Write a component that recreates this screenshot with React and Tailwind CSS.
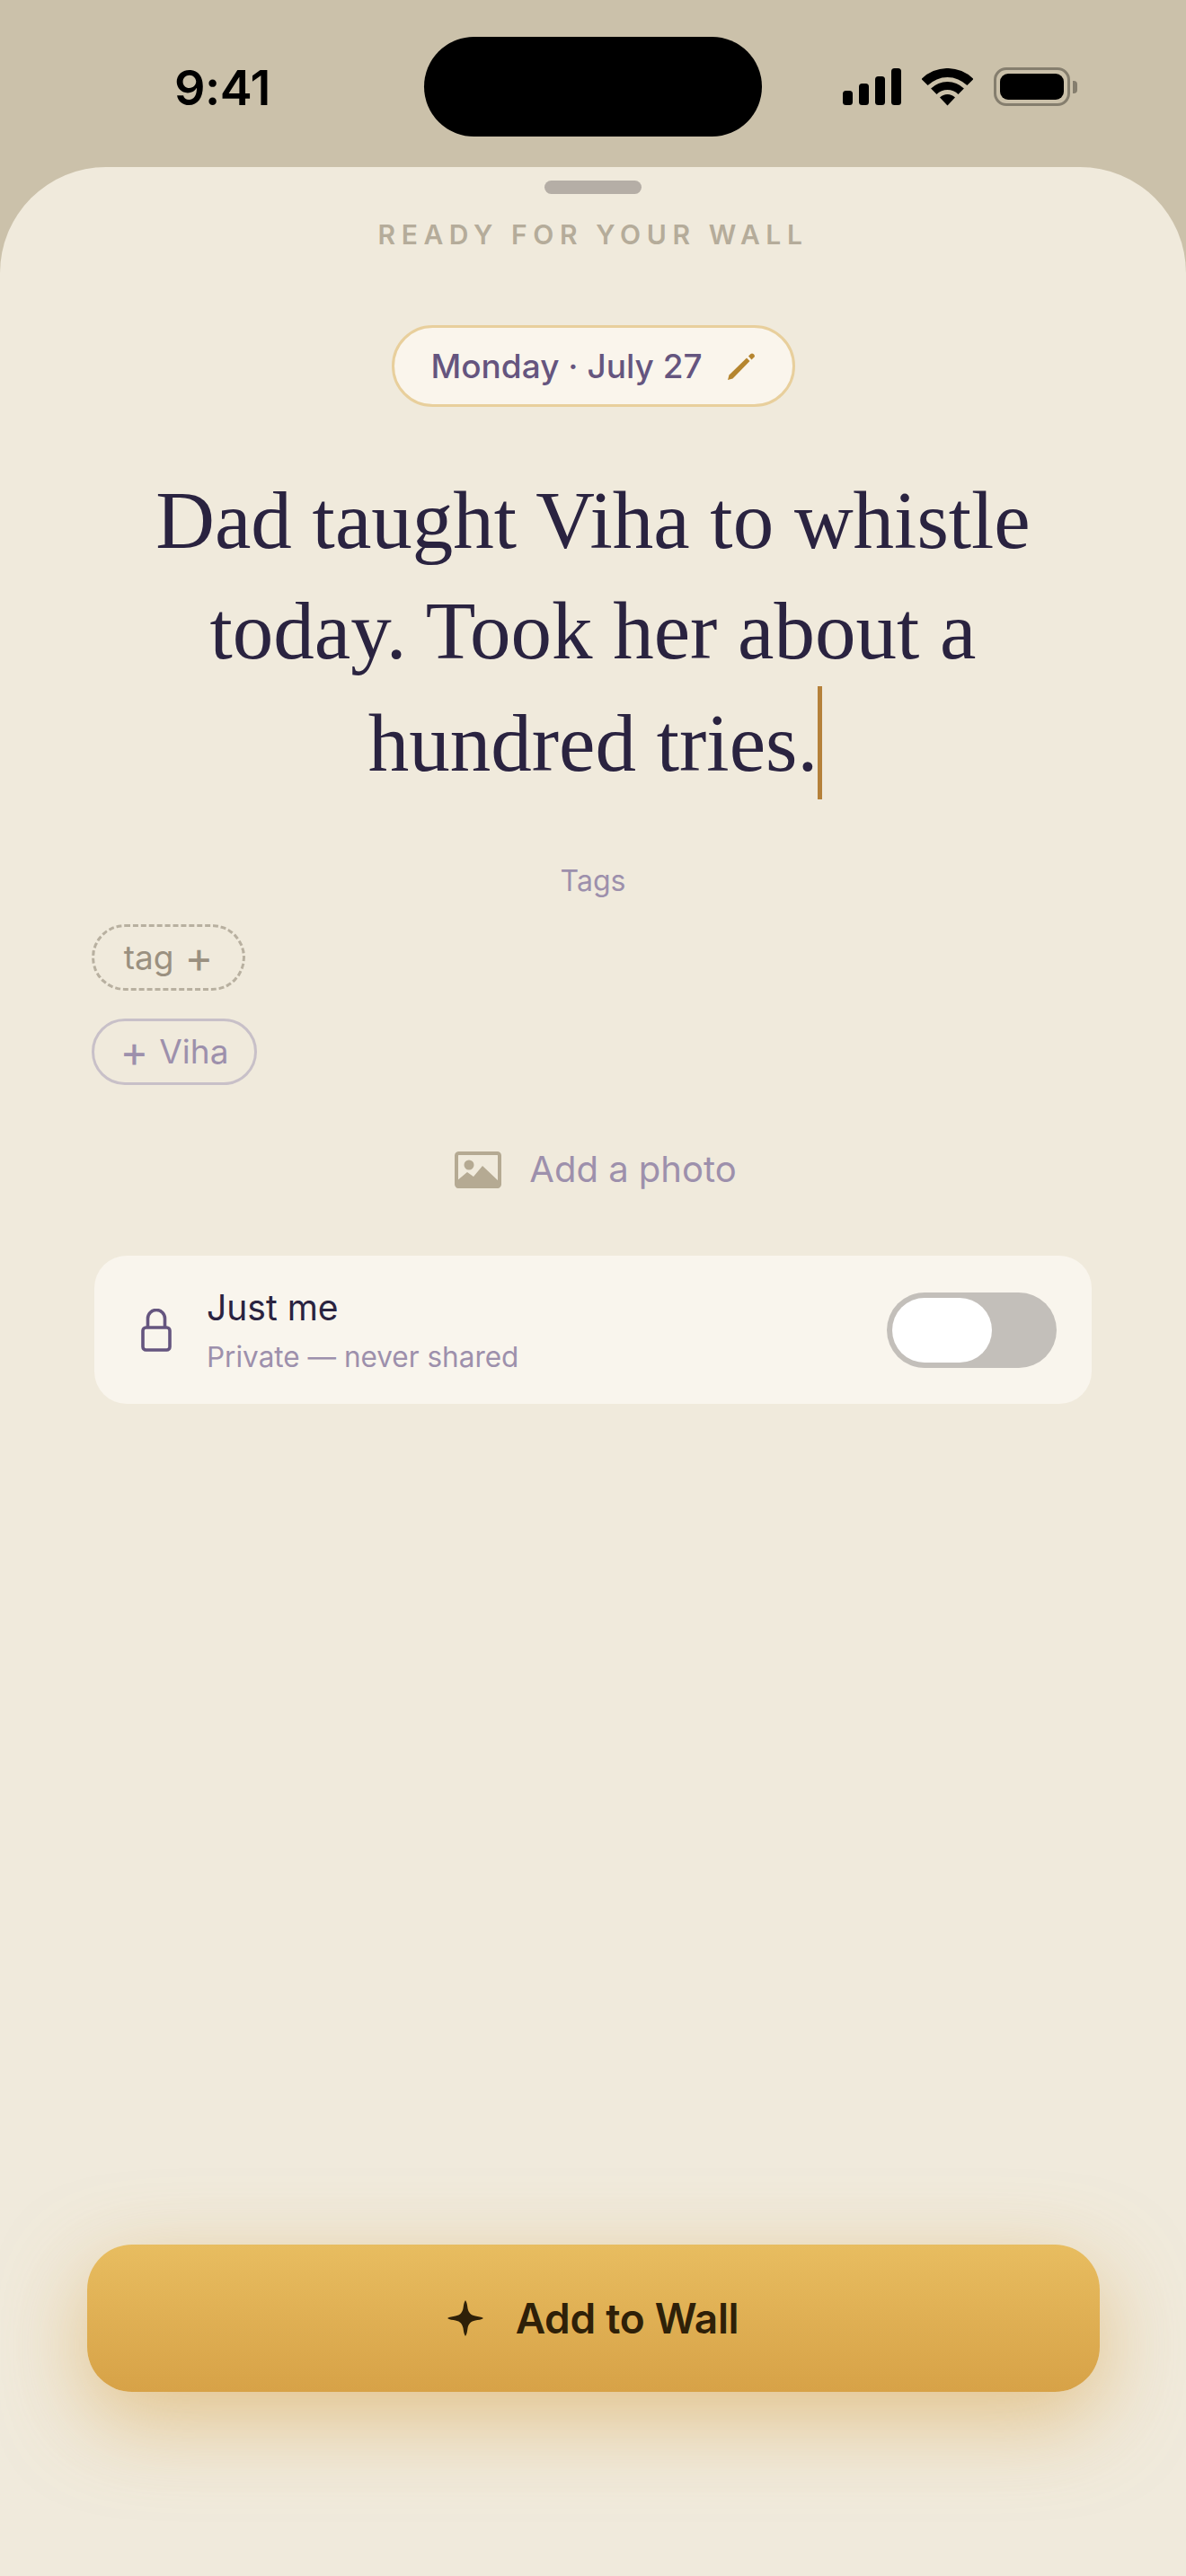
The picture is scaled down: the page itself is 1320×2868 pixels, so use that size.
import React from 'react';

const sans = 'font-["Inter",sans-serif]';

function SignalIcon() {
  return (
    <svg width="65" height="41" viewBox="0 0 65 41" fill="#000">
      <rect x="0" y="25" width="11" height="16" rx="3.5" />
      <rect x="18" y="17" width="11" height="24" rx="3.5" />
      <rect x="36" y="9" width="11" height="32" rx="3.5" />
      <rect x="54" y="0" width="11" height="41" rx="3.5" />
    </svg>
  );
}

function WifiIcon() {
  return (
    <svg width="57" height="42" viewBox="0 0 57 42" fill="#000">
      <path d="M-0.5 12 A41 41 0 0 1 57.5 12 L50.4 19.1 A31 31 0 0 0 6.6 19.1 Z" />
      <path d="M10.1 22.6 A26 26 0 0 1 46.9 22.6 L40.5 29 A17 17 0 0 0 16.5 29 Z" />
      <path d="M20 32.5 A12 12 0 0 1 37 32.5 L28.5 41.5 Z" />
    </svg>
  );
}

function BatteryIcon() {
  return (
    <div className="flex items-center">
      <div className="w-[85px] h-[43px] rounded-[14px] border-[3px] border-[#857e6e] p-[4px]">
        <div className="w-full h-full rounded-[9px] bg-black" />
      </div>
      <div className="w-[5px] h-[14px] ml-[3px] rounded-r-[4px] bg-[#857e6e]" />
    </div>
  );
}

function PencilIcon() {
  return (
    <svg width="32" height="32" viewBox="0 0 32 32">
      <path d="M1 31 L2.5 25.5 L22 6.5 L25.5 10 L6.5 29.5 Z" fill="#b5852f" />
      <path d="M24 4.5 L26.5 2 Q28 1 29.5 2 L30.5 3 Q31.5 4.5 30.5 5.5 L27.5 8.5 Z" fill="#b5852f" />
    </svg>
  );
}

function ImageIcon() {
  return (
    <svg width="52" height="41" viewBox="0 0 52 41">
      <rect x="2" y="2" width="48" height="37" rx="2.5" fill="none" stroke="#b5aa93" strokeWidth="4" />
      <circle cx="16" cy="15" r="5.5" fill="#b5aa93" />
      <path d="M2 33 L14 23 L21 28 L31 16 L50 34 V38 Q50 41 47 41 H5 Q2 41 2 38 Z" fill="#b5aa93" />
    </svg>
  );
}

function LockIcon() {
  return (
    <svg width="34" height="48" viewBox="0 0 34 48" fill="none" stroke="#65557f" strokeWidth="3.6">
      <path d="M7.5 21 V11 A9.5 9.5 0 0 1 26.5 11 V21" />
      <rect x="2" y="21" width="30" height="25" rx="3.5" />
    </svg>
  );
}

function SparkleIcon() {
  return (
    <svg width="40" height="40" viewBox="0 0 40 40" fill="#2e2008">
      <path d="M20 0 C21.5 2 22 5 22.5 9 C23.5 14 26 16.5 31 17.5 C34 18 38 18.5 40 20 C38 21.5 34 22 31 22.5 C26 23.5 23.5 26 22.5 31 C22 35 21.5 38 20 40 C18.5 38 18 35 17.5 31 C16.5 26 14 23.5 9 22.5 C6 22 2 21.5 0 20 C2 18.5 6 18 9 17.5 C14 16.5 16.5 14 17.5 9 C18 5 18.5 2 20 0 Z" />
    </svg>
  );
}

export default function App() {
  return (
    <div className={`w-[1320px] h-[2868px] flex flex-col bg-[#cbc1aa] ${sans}`}>
      {/* status bar */}
      <div className="h-[186px] shrink-0 flex items-start pl-[194px]">
        <div className="w-[278px] pt-[68px] text-[54px] leading-[60px] font-semibold text-black tracking-[-0.5px]">9:41</div>
        <div className="w-[376px] h-[111px] mt-[41px] rounded-full bg-black" />
        <div className="flex items-center gap-[23px] ml-[90px] mt-[75px]">
          <SignalIcon />
          <WifiIcon />
          <BatteryIcon />
        </div>
      </div>

      {/* sheet */}
      <div className="flex-1 flex flex-col items-center bg-[#f0eadc] rounded-t-[118px]">
        <div className="w-[108px] h-[15px] mt-[15px] rounded-full bg-[#b5aea6]" />
        <div className="mt-[25px] h-[40px] leading-[40px] text-[30px] font-semibold tracking-[6.6px] text-[#b5ac9a]">READY FOR YOUR WALL</div>

        <div className="mt-[81px] h-[91px] w-[449px] pl-[41px] flex items-center gap-[27px] rounded-full border-[3px] border-[#e8cf9c] bg-[#faf5ec]">
          <span className="text-[37px] font-medium text-[#65557f] whitespace-nowrap">Monday · July 27</span>
          <PencilIcon />
        </div>

        <div className='mt-[65px] w-[1100px] text-center font-["Liberation_Serif",serif] text-[91px] leading-[123px] text-[#2a2340]'>
          <div>Dad taught Viha to whistle</div>
          <div>today. Took her about a</div>
          <div className="flex justify-center items-center pl-[5px]">
            hundred tries.
            <span className="w-[5px] h-[126px] bg-[#b5813a]" />
          </div>
        </div>

        <div className="mt-[69px] h-[44px] leading-[44px] text-[32px] text-[#9d90ac]">Tags</div>

        <div className="mt-[26px] w-full pl-[102px] flex flex-col items-start gap-[31px]">
          <div className="h-[74px] w-[171px] flex items-center justify-center gap-[12px] rounded-full border-[3px] border-dashed border-[#b8b0a0] text-[37px] text-[#9a9080]">
            <span>tag</span><span className="text-[48px] leading-none">+</span>
          </div>
          <div className="h-[74px] w-[184px] flex items-center justify-center gap-[12px] rounded-full border-[3px] border-[#c8c0c8] text-[37px] text-[#9d90ac]">
            <span className="text-[48px] leading-none">+</span><span>Viha</span>
          </div>
        </div>

        <div className="mt-[72px] h-[44px] pl-[6px] flex items-center gap-[31px]">
          <ImageIcon />
          <span className="text-[40px] text-[#9d90ac]">Add a photo</span>
        </div>

        <div className="mt-[74px] w-[1110px] h-[165px] flex items-center pl-[52px] pr-[39px] rounded-[36px] bg-[#f9f5ed]">
          <LockIcon />
          <div className="ml-[39px] flex flex-col">
            <span className="mt-[2px] text-[39px] leading-[50px] text-[#2a2340]">Just me</span>
            <span className="mt-[8px] text-[31.5px] leading-[44px] text-[#9d90ac]">Private — never shared</span>
          </div>
          <div className="ml-auto w-[189px] h-[84px] p-[6px] rounded-full bg-[#c3bfba]">
            <div className="w-[111px] h-[72px] rounded-full bg-white" />
          </div>
        </div>

        <div className="mt-auto mb-[205px] w-[1127px] h-[164px] flex items-center justify-center gap-[36px] rounded-[50px] bg-gradient-to-b from-[#e8bd60] to-[#d7a247] shadow-[0_30px_96px_rgba(215,162,71,0.55)]">
          <SparkleIcon />
          <span className="text-[46px] font-semibold tracking-[-0.3px] text-[#2e2008]">Add to Wall</span>
        </div>
      </div>
    </div>
  );
}
